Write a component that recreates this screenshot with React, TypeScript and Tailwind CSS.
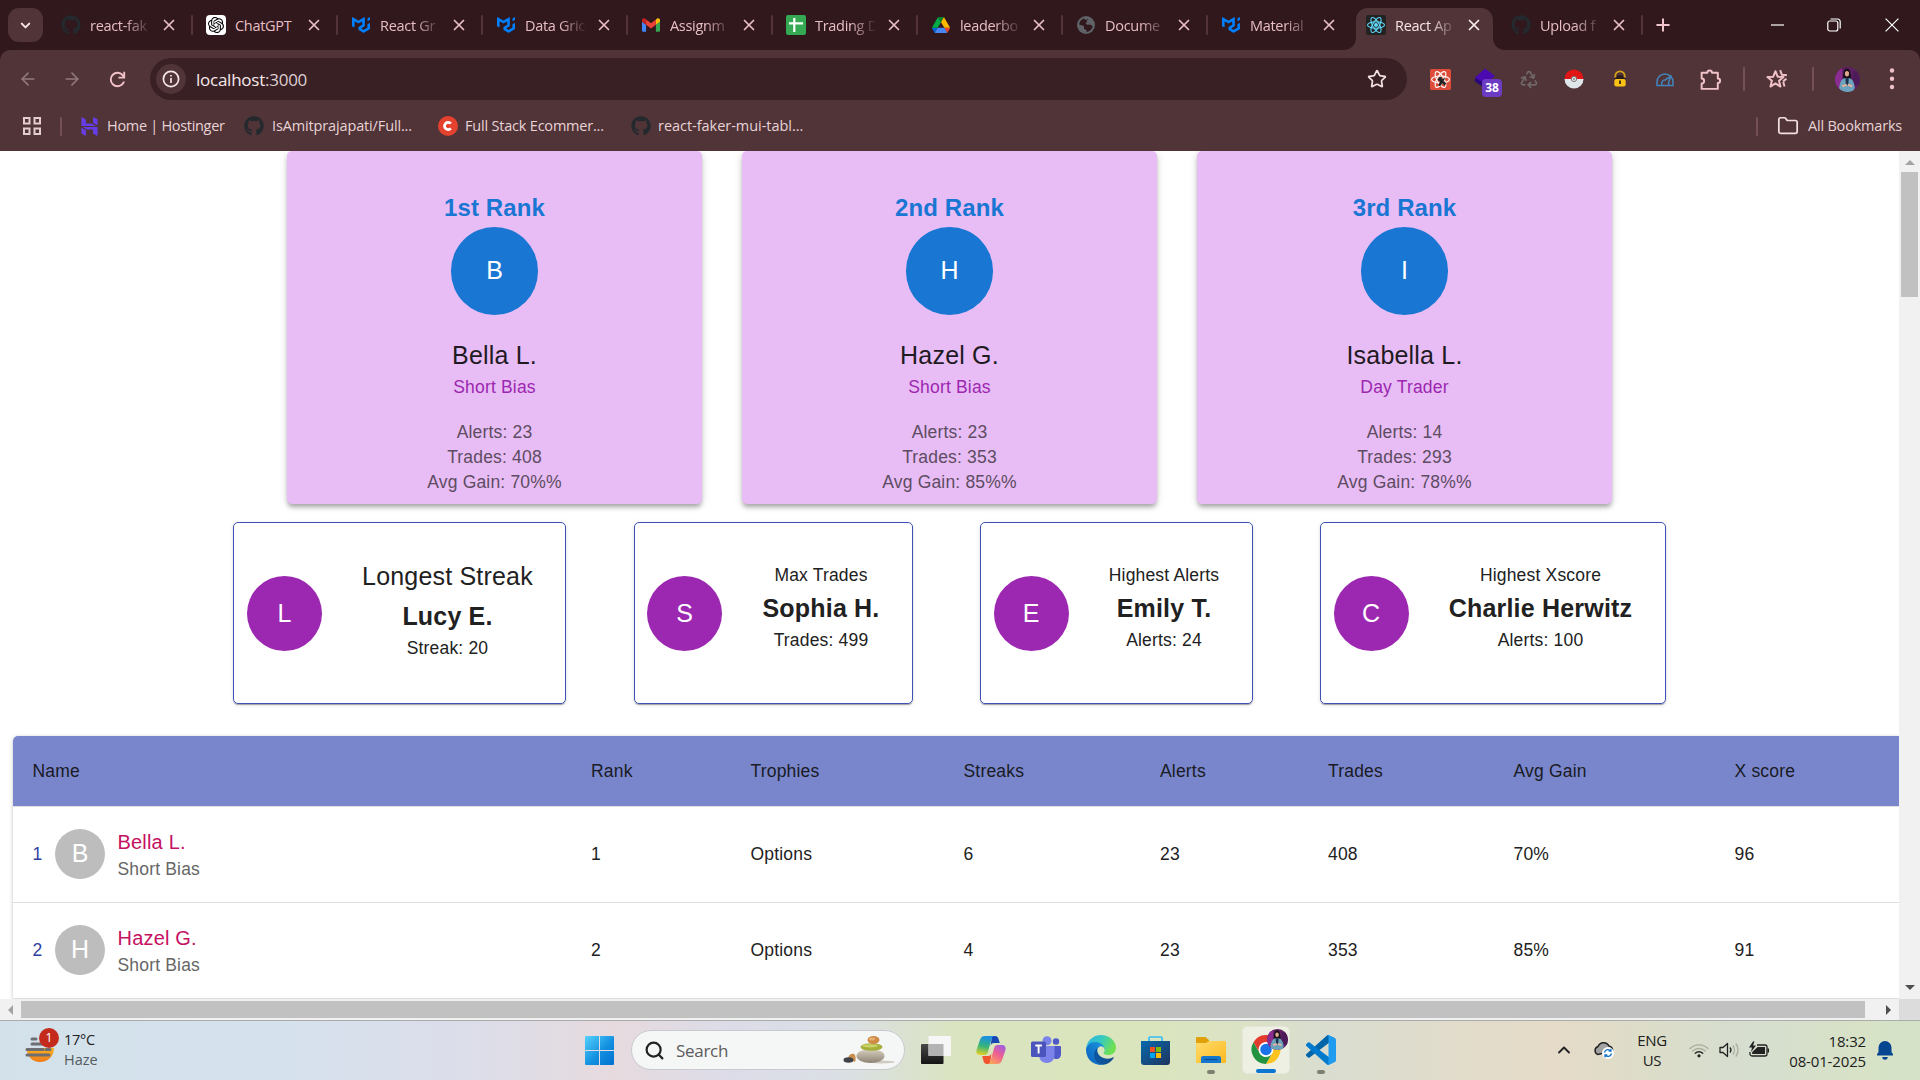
import React from "react";
import { FaGithub } from "react-icons/fa";
import { SiMui, SiOpenai, SiHostinger } from "react-icons/si";
import { ArrowLeft, ArrowRight, Recycle, Star, X, Plus, Folder, ChevronDown, ChevronUp, Search } from "lucide-react";

const UI = "font-['Open_Sans','Noto_Sans',sans-serif]";
const ARIAL = "font-['Liberation_Sans',Arial,sans-serif]";

/* ---------- favicons ---------- */
const Github = () => <FaGithub className="size-5 text-[#24292e]" />;

const OpenAi = () => (
  <span className="flex size-5 items-center justify-center rounded-[4px] bg-white">
    <SiOpenai className="size-4 text-black" />
  </span>
);

const Mui = () => <SiMui className="mx-px size-[18px] text-[#007fff]" />;

const Gmail = () => (
  <svg viewBox="52 42 88 66" className="mx-px h-[14px] w-[18px]">
    <path fill="#4285f4" d="M58 108h14V74L52 59v43c0 3.32 2.69 6 6 6" />
    <path fill="#34a853" d="M120 108h14c3.32 0 6-2.69 6-6V59l-20 15" />
    <path fill="#fbbc04" d="M120 48v26l20-15v-8c0-7.42-8.47-11.65-14.4-7.2" />
    <path fill="#ea4335" d="M72 74V48l24 18 24-18v26L96 92" />
    <path fill="#c5221f" d="M52 51v8l20 15V48l-5.600-4.200c-5.940-4.450-14.400-.220-14.400 7.200" />
  </svg>
);

const Sheets = () => (
  <svg viewBox="0 0 20 20" className="size-5">
    <rect width="20" height="20" rx="2" fill="#34a853" />
    <path d="M8.300 3v14M3 8.300h14" stroke="#fff" strokeWidth="2.200" />
  </svg>
);

const Drive = () => (
  <svg viewBox="0 0 87.3 78" className="mx-px h-4 w-[18px]">
    <path d="m6.600 66.850 3.850 6.650c.8 1.400 1.950 2.500 3.300 3.300l13.750-23.800h-27.500c0 1.550.4 3.100 1.200 4.500z" fill="#0066da" />
    <path d="m43.650 25-13.750-23.800c-1.350.8-2.500 1.900-3.300 3.300l-25.400 44a9.060 9.060 0 0 0-1.200 4.500h27.500z" fill="#00ac47" />
    <path d="m73.550 76.800c1.350-.8 2.500-1.900 3.300-3.300l1.600-2.750 7.650-13.250c.8-1.400 1.200-2.950 1.200-4.500h-27.500l5.850 11.500z" fill="#ea4335" />
    <path d="m43.650 25 13.750-23.800c-1.350-.8-2.900-1.200-4.500-1.200h-18.500c-1.600 0-3.150.45-4.500 1.200z" fill="#00832d" />
    <path d="m59.800 53h-32.300l-13.750 23.800c1.350.8 2.900 1.200 4.500 1.200h50.800c1.600 0 3.150-.45 4.500-1.200z" fill="#4688f4" />
    <path d="m73.400 26.500-12.700-22c-.8-1.400-1.950-2.500-3.300-3.300l-13.750 23.800 16.150 28h27.450c0-1.550-.4-3.100-1.200-4.500z" fill="#ffba00" />
  </svg>
);

const Globe = () => (
  <svg viewBox="0 0 20 20" className="size-5">
    <circle cx="10" cy="10" r="9" fill="#5f6368" />
    <path d="M8 3.500C5 4.500 3.200 7 3.200 9.500L8 11v3l2.500 1v2c3-.3 5.500-2.500 6.200-5.500l-1.800-1.800h-4L9.500 8l2.800-1.500V4L9.500 5z" fill="#30181d" />
    <path d="M10.500 5.500 13 4l2.500 2-1 2.500-3-.5z" fill="#5f6368" />
  </svg>
);

const Atom = ({ color }: { color: string }) => (
  <g fill="none" stroke={color} strokeWidth="1.100">
    <ellipse cx="10" cy="10" rx="8.500" ry="3.300" />
    <ellipse cx="10" cy="10" rx="8.500" ry="3.300" transform="rotate(60 10 10)" />
    <ellipse cx="10" cy="10" rx="8.500" ry="3.300" transform="rotate(120 10 10)" />
    <circle cx="10" cy="10" r="1.400" fill={color} />
  </g>
);

const ReactIcon = () => (
  <svg viewBox="0 0 20 20" className="size-5">
    <rect width="20" height="20" rx="2" fill="#222" />
    <Atom color="#61dafb" />
  </svg>
);

const tabs = [
  { icon: <Github />, title: "react-fak" },
  { icon: <OpenAi />, title: "ChatGPT", whole: true },
  { icon: <Mui />, title: "React Gr" },
  { icon: <Mui />, title: "Data Gric" },
  { icon: <Gmail />, title: "Assignm" },
  { icon: <Sheets />, title: "Trading D" },
  { icon: <Drive />, title: "leaderbo" },
  { icon: <Globe />, title: "Docume" },
  { icon: <Mui />, title: "Material" },
  { icon: <ReactIcon />, title: "React Ap", active: true },
  { icon: <Github />, title: "Upload f" },
];

function TabStrip() {
  return (
    <div className="flex h-[50px] shrink-0 bg-[#30181d]">
      <div className="mt-2 ml-2 flex h-[34px] w-[35px] items-center justify-center rounded-[11px] bg-[#503438]">
        <ChevronDown className="size-[15px] text-[#f6e2e5]" strokeWidth={3.200} />
      </div>
      <div className="ml-[5px] flex">
        {tabs.map((t, i) => (
          <div key={i} className="relative w-[145px]">
            {t.active && (
              <svg viewBox="0 0 162 42" className="absolute top-2 -left-[10px] h-[42px] w-[162px]">
                <path d="M0 42C8 42 13 37 13 29V12C13 5 18 0 25 0H138C145 0 150 5 150 12V29C150 37 155 42 162 42Z" fill="#503438" />
              </svg>
            )}
            <div className="relative mt-[14px] flex h-[22px] items-center pl-[12px]">
              <span className="flex w-[21px] justify-center">{t.icon}</span>
              <span
                className={`ml-[9px] w-[60px] pt-px text-[14.500px] tracking-[-0.300px] whitespace-nowrap ${t.whole ? "" : "[mask-image:linear-gradient(to_right,black_58%,rgba(0,0,0,0.12)_98%)]"} ${t.active ? "text-[#f8e4e6]" : "text-[#e8bec4]"}`}
              >
                {t.title}
              </span>
              <X className={`ml-[10px] size-[18px] ${t.active ? "text-[#fbeced]" : "text-[#e8bec4]"}`} strokeWidth={2.300} />
              {i !== 8 && i !== 9 && <span className="ml-[13px] h-5 w-[2px] rounded bg-[#553439]" />}
            </div>
          </div>
        ))}
      </div>
      <div className="mt-[14px] flex h-[22px] items-center">
        <Plus className="ml-[10px] size-5 text-[#f0c6cc]" strokeWidth={2.400} />
        <svg viewBox="0 0 14 14" className="ml-[98px] size-[14px]">
          <path d="M0 7h13" stroke="#fff" strokeWidth="1.200" />
        </svg>
        <svg viewBox="0 0 14 14" className="ml-[42px] size-[14px]" fill="none" stroke="#fff" strokeWidth="1.200">
          <rect x=".8" y="3" width="10" height="10" rx="2" />
          <path d="M3.500 1h7A2.800 2.800 0 0 1 13.200 3.800v6.700" />
        </svg>
        <svg viewBox="0 0 14 14" className="ml-[44px] size-[14px]" stroke="#fff" strokeWidth="1.200">
          <path d="m.6.6 12.800 12.800M13.400.6.6 13.400" />
        </svg>
      </div>
    </div>
  );
}

const Portrait = ({ className }: { className: string }) => (
  <svg viewBox="0 0 24 24" className={className}>
    <defs>
      <clipPath id="portrait">
        <circle cx="12" cy="12" r="12" />
      </clipPath>
    </defs>
    <g clipPath="url(#portrait)">
      <rect width="24" height="24" fill="#5e1f63" />
      <path d="M0 0h7v24H0z" fill="#8a2c90" />
      <path d="M17 4h7v14h-7z" fill="#4d1c58" />
      <path d="M8 13C7.500 6 8.500 1.500 11.500 1.500S15.500 6 15.500 13z" fill="#1a1018" />
      <ellipse cx="11.500" cy="6.500" rx="2" ry="2.600" fill="#e0a994" />
      <path d="M4 20c.5-6 3-9.500 6-9.500h3c3 0 5.500 3.500 6 9.500l-2 5H6z" fill="#6ba3bd" />
      <path d="M10 10.500h3.200l-.4 7h-2.400z" fill="#1c3350" />
      <path d="M6.500 17.500 11 16l.5 2-4 1.500zM17 17.500 12.500 16l-.5 2 4 1.500z" fill="#e3b29d" />
    </g>
  </svg>
);

function Toolbar() {
  return (
    <div className="relative h-[58px] shrink-0 bg-[#30181d]">
      <div className="flex h-full items-center rounded-t-[10px] bg-[#503438]">
        <ArrowLeft className="ml-[18px] size-5 text-[#91797c]" strokeWidth={1.900} />
        <ArrowRight className="ml-[24px] size-5 text-[#91797c]" strokeWidth={1.900} />
        <svg viewBox="0 0 24 24" className="ml-[24px] size-[23px]" fill="#f0c2c8">
          <path d="M12 20q-3.350 0-5.675-2.325T4 12t2.325-5.675T12 4q1.725 0 3.300.713T18 6.750V4h2v7h-7V9h4.200q-.8-1.400-2.187-2.200T12 6Q9.500 6 7.750 7.750T6 12t1.750 4.250T12 18q1.925 0 3.475-1.100T17.650 14h2.100q-.7 2.650-2.850 4.325T12 20" />
        </svg>
        <div className="ml-[21px] flex h-[42px] w-[1257px] items-center rounded-full bg-[#382024]">
          <span className="ml-[6px] flex size-[30px] items-center justify-center rounded-full bg-[#503438]">
            <svg viewBox="0 0 18 18" className="size-[18px]" fill="none" stroke="#f6e6e8" strokeWidth="1.700">
              <circle cx="9" cy="9" r="7.600" />
              <path d="M9 8v5M9 5v1.600" />
            </svg>
          </span>
          <span className="ml-[10px] pt-px text-[17px] tracking-[-0.250px] text-[#f7e8ea]">
            localhost<span className="text-[#dfced1]">:3000</span>
          </span>
          <Star className="mr-[20px] ml-auto size-5 text-[#f0dfe1]" strokeWidth={2.100} />
        </div>
        <svg viewBox="0 0 20 20" className="ml-[23px] size-[21px]">
          <rect width="20" height="20" rx="1.500" fill="#dd4b39" />
          <Atom color="#fff" />
          <path d="M9 7.500h2l.3 2 3.500-1-2 3 2.700 2-1.500 2.500-2-2.500-2.500 3-1.500-1 1.500-3.500-2.500-1.500z" fill="#222" />
        </svg>
        <div className="relative ml-[21px] h-[30px] w-[30px]">
          <svg viewBox="0 0 30 30" className="size-[30px]">
            <path d="m4 12-1.500 5L12 24l9-6z" fill="#29087c" />
            <path d="m13 4.500 10 7.500-10 7.500L3 13.500z" fill="#4a0ab0" />
          </svg>
          <span className="absolute top-[15px] left-[10px] flex h-[18px] w-5 items-center justify-center rounded-[4px] bg-[#6b3bc4] text-[12px] font-bold text-white">38</span>
        </div>
        <Recycle className="ml-[17px] size-5 text-[#716869]" strokeWidth={2} />
        <svg viewBox="0 0 20 20" className="ml-[25px] size-5">
          <path d="M.5 10a9.500 9.500 0 0 1 19 0z" fill="#e01616" />
          <path d="M.5 10a9.500 9.500 0 0 0 19 0z" fill="#dfe7ea" />
          <circle cx="10" cy="10" r="2.600" fill="#e5e5e5" stroke="#777" strokeWidth="1" />
          <circle cx="10" cy="10" r="1" fill="#888" />
        </svg>
        <svg viewBox="0 0 16 20" className="ml-[28px] h-5 w-4">
          <path d="M3.300 9V7a4.700 4.700 0 0 1 9.400 0v2" fill="none" stroke="#d9a514" strokeWidth="1.800" />
          <path d="M5 6.300h6V8l2.500.8v1.500h-11V8.800L5 8z" fill="#2a1d20" />
          <rect x="2.300" y="10" width="11.400" height="7.500" rx="2" fill="#fbc114" />
          <path d="M8 11.500v3.500" stroke="#33251b" strokeWidth="1.800" />
        </svg>
        <svg viewBox="0 0 20 20" className="ml-[27px] size-5" fill="none" stroke="#4285bd" strokeWidth="1.500">
          <path d="M2 16.500v-3.500a8 8 0 0 1 16 0v3.500z" />
          <path d="M7 16a3.500 3.500 0 0 1 3-5l5.500-3.500-2 6.500.5 2" />
        </svg>
        <svg viewBox="0 0 24 24" className="ml-[23px] size-[25px]" fill="none" stroke="#f0c2c8" strokeWidth="1.900" strokeLinejoin="round">
          <path d="M3.500 5.500h5.500a2.200 2.200 0 0 1 4.400 0h5.600v5.500a2.200 2.200 0 0 1 0 4.400v5.600H3.500v-5.200a2.300 2.300 0 0 0 0-4.800z" />
        </svg>
        <span className="ml-[20px] h-6 w-[2px] rounded bg-[#755155]" />
        <svg viewBox="0 0 24 24" className="ml-[19px] size-[25px]" fill="none" stroke="#f0c2c8" strokeWidth="1.900" strokeLinejoin="round">
          <path d="m11 4 2.100 5.300 5.600.4-4.300 3.600 1.400 5.500-4.800-3-4.800 3 1.400-5.500L3.300 9.700l5.600-.4z" />
          <path d="m15.500 3 1.700 4.500 4.800.5M18.300 13.800l3.200-2.600M18.500 14.500l1.200 4.300" />
        </svg>
        <span className="ml-[23px] h-6 w-[2px] rounded bg-[#755155]" />
        <Portrait className="ml-[21px] size-[25px]" />
        <svg viewBox="0 0 6 24" className="ml-[29px] h-6 w-[6px]" fill="#f0c2c8">
          <circle cx="3" cy="3.500" r="2.200" />
          <circle cx="3" cy="11.700" r="2.200" />
          <circle cx="3" cy="20" r="2.200" />
        </svg>
      </div>
    </div>
  );
}

function Bookmarks() {
  return (
    <div className="flex h-[43px] shrink-0 items-center bg-[#503438] pb-[7px] text-[14.500px] whitespace-nowrap text-[#e8d3d6]">
      <svg viewBox="0 0 18 18" className="ml-[23px] size-[18px]" fill="none" stroke="#e2cdd0" strokeWidth="2">
        <path d="M1 1h5.500v5.500H1zM11.500 1H17v5.500h-5.500zM1 11.500h5.500V17H1zM11.500 11.500H17V17h-5.500z" />
      </svg>
      <span className="ml-[19px] h-[19px] w-[2px] rounded bg-[#755155]" />
      <SiHostinger className="ml-[18px] size-[19px] text-[#673de6]" />
      <span className="ml-[8px] w-[118px] tracking-[-0.300px]">Home | Hostinger</span>
      <FaGithub className="ml-[19px] size-5 text-[#24292e]" />
      <span className="ml-[8px] w-[141px] tracking-[-0.140px]">IsAmitprajapati/Full...</span>
      <svg viewBox="0 0 20 20" className="ml-[25px] size-5">
        <circle cx="10" cy="10" r="10" fill="#e4412f" />
        <path d="M12.800 7.600A3.600 3.600 0 1 0 12.800 12.400" fill="none" stroke="#fff" strokeWidth="2.800" />
      </svg>
      <span className="ml-[7px] w-[141px] tracking-[-0.200px]">Full Stack Ecommer...</span>
      <FaGithub className="ml-[25px] size-5 text-[#24292e]" />
      <span className="ml-[7px] tracking-[-0.030px]">react-faker-mui-tabl...</span>
      <span className="ml-auto h-[19px] w-[2px] rounded bg-[#755155]" />
      <Folder className="ml-[19px] size-[22px] text-[#f3dfe2]" strokeWidth={1.900} />
      <span className="mr-[17px] ml-[9px] w-[95px] tracking-[-0.200px]">All Bookmarks</span>
    </div>
  );
}

/* ---------- page ---------- */
const ranks = [
  { rank: "1st Rank", letter: "B", name: "Bella L.", type: "Short Bias", alerts: 23, trades: 408, gain: "70%%" },
  { rank: "2nd Rank", letter: "H", name: "Hazel G.", type: "Short Bias", alerts: 23, trades: 353, gain: "85%%" },
  { rank: "3rd Rank", letter: "I", name: "Isabella L.", type: "Day Trader", alerts: 14, trades: 293, gain: "78%%" },
];

const stats = [
  { letter: "L", label: "Longest Streak", name: "Lucy E.", value: "Streak: 20", card: "w-[333px] pl-[13px]", text: "w-[237px]", big: true },
  { letter: "S", label: "Max Trades", name: "Sophia H.", value: "Trades: 499", card: "ml-[68px] w-[279px] pl-[12px]", text: "w-[184px]" },
  { letter: "E", label: "Highest Alerts", name: "Emily T.", value: "Alerts: 24", card: "ml-[67px] w-[273px] pl-[12.500px]", text: "w-[177px]" },
  { letter: "C", label: "Highest Xscore", name: "Charlie Herwitz", value: "Alerts: 100", card: "ml-[67px] w-[346px] pl-[12.500px]", text: "w-[250px]" },
];

const cols = "grid grid-cols-[558.500px_159.500px_213px_196.500px_168px_185.500px_221px_1fr] items-center pl-[19.500px]";

const rows = [
  { n: 1, letter: "B", name: "Bella L.", type: "Short Bias", cells: ["1", "Options", "6", "23", "408", "70%", "96"] },
  { n: 2, letter: "H", name: "Hazel G.", type: "Short Bias", cells: ["2", "Options", "4", "23", "353", "85%", "91"] },
];

function Page() {
  return (
    <div className={`flex h-[848px] w-[1899px] flex-col overflow-hidden bg-white text-[17.500px] text-[#212121] ${ARIAL}`}>
      <div className="flex gap-10 pl-[287px]">
        {ranks.map((r) => (
          <div
            key={r.rank}
            className="flex h-[353px] w-[415px] flex-col items-center rounded-[5px] bg-[#e8bdf5] pt-[38px] shadow-[0px_4px_4px_-2px_rgba(0,0,0,0.2),0px_4px_5px_0px_rgba(0,0,0,0.14),0px_1px_10px_0px_rgba(0,0,0,0.12)]"
          >
            <div className="text-[24px] leading-[38px] font-bold tracking-[0.100px] text-[#1976d2]">{r.rank}</div>
            <div className="flex size-[87.500px] items-center justify-center rounded-full bg-[#1976d2] text-[25px] text-white">{r.letter}</div>
            <div className="mt-[20.500px] text-[25px] leading-[40px] tracking-[0.190px] text-[#1f1a22]">{r.name}</div>
            <div className="leading-[24px] tracking-[0.180px] text-[#9c27b0]">{r.type}</div>
            <div className="mt-[21px] text-center leading-[25px] tracking-[0.180px] text-[#5d4c62]">
              <div>Alerts: {r.alerts}</div>
              <div>Trades: {r.trades}</div>
              <div>Avg Gain: {r.gain}</div>
            </div>
          </div>
        ))}
      </div>

      <div className="mt-[18px] flex pl-[233px]">
        {stats.map((s) => (
          <div
            key={s.letter}
            className={`flex h-[182px] rounded-[5px] border border-[#3f51b5] shadow-[0px_2px_1px_-1px_rgba(0,0,0,0.2),0px_1px_1px_0px_rgba(0,0,0,0.14),0px_1px_4px_0px_rgba(0,0,0,0.12)] ${s.card}`}
          >
            <div className="mt-[53px] flex size-[75px] shrink-0 items-center justify-center rounded-full bg-[#9c27b0] text-[25px] text-white">{s.letter}</div>
            <div className={`ml-[7px] shrink-0 text-center ${s.text} ${s.big ? "pt-[33px]" : "pt-[39px]"}`}>
              <div className={s.big ? "text-[25px] leading-[40px] tracking-[0.190px]" : "leading-[26px] tracking-[0.180px]"}>{s.label}</div>
              <div className="text-[25px] leading-[40px] font-bold tracking-[0.190px]">{s.name}</div>
              <div className="leading-[24px] tracking-[0.180px]">{s.value}</div>
            </div>
          </div>
        ))}
      </div>

      <div className="mt-[32px] ml-[13px] rounded-tl-[5px] shadow-[0px_1px_4px_0px_rgba(0,0,0,0.24)]">
        <div className={`h-[71px] rounded-tl-[5px] border-b border-[#dedede] bg-[#7986cb] text-[#1a1b24] ${cols}`}>
          {["Name", "Rank", "Trophies", "Streaks", "Alerts", "Trades", "Avg Gain", "X score"].map((h) => (
            <span key={h} className="tracking-[0.180px]">{h}</span>
          ))}
        </div>
        {rows.map((r) => (
          <div key={r.n} className={`h-[96px] border-b border-[#dedede] bg-white ${cols}`}>
            <div className="flex items-center">
              <span className="w-[22.500px] text-[#303f9f]">{r.n}</span>
              <span className="mb-px flex size-[50px] items-center justify-center rounded-full bg-[#bdbdbd] text-[25px] text-white">{r.letter}</span>
              <div className="ml-[12.500px]">
                <div className="text-[20px] leading-[29px] tracking-[0.190px] text-[#c51162]">{r.name}</div>
                <div className="leading-[25px] tracking-[0.180px] text-[#666]">{r.type}</div>
              </div>
            </div>
            {r.cells.map((c, i) => (
              <span key={i} className="tracking-[0.180px]">{c}</span>
            ))}
          </div>
        ))}
      </div>
    </div>
  );
}

function VScroll() {
  return (
    <div className="flex h-[848px] w-[21px] flex-col items-center bg-[#f1f1f1]">
      <svg viewBox="0 0 10 5" className="mt-[9px] h-[5px] w-[10px]" fill="#a3a3a3">
        <path d="M0 5 5 0l5 5z" />
      </svg>
      <div className="mt-[7px] h-[125px] w-[17px] bg-[#c1c1c1]" />
      <svg viewBox="0 0 10 5" className="mt-auto mb-[9px] h-[5px] w-[10px]" fill="#505050">
        <path d="M0 0l5 5 5-5z" />
      </svg>
    </div>
  );
}

function HScroll() {
  return (
    <div className="flex h-[21px] shrink-0 items-center bg-[#f1f1f1]">
      <svg viewBox="0 0 5 10" className="ml-[8px] h-[10px] w-[5px]" fill="#a3a3a3">
        <path d="M5 0 0 5l5 5z" />
      </svg>
      <div className="ml-[8px] h-[17px] w-[1844px] bg-[#c1c1c1]" />
      <svg viewBox="0 0 5 10" className="ml-[21px] h-[10px] w-[5px]" fill="#505050">
        <path d="M0 0l5 5-5 5z" />
      </svg>
      <div className="ml-auto h-full w-[21px] bg-[#dcdcdc]" />
    </div>
  );
}

/* ---------- taskbar ---------- */
const Haze = () => (
  <svg viewBox="0 0 30 30" className="size-[30px]">
    <defs>
      <linearGradient id="sun" x1="0" y1="0" x2="0" y2="1">
        <stop offset="0" stopColor="#f9b51f" />
        <stop offset="1" stopColor="#ef7a1a" />
      </linearGradient>
    </defs>
    <path d="M1 15h28c0 8-6 14-14 14S3 24 1 15" fill="url(#sun)" />
    <path d="M7 6h4M7 11h21M2 16.500h16M21 16.500h4M2 22h22" stroke="#6d6d72" strokeWidth="3" strokeLinecap="round" />
  </svg>
);

const Windows = () => (
  <svg viewBox="0 0 29 29" className="size-[29px]">
    <defs>
      <linearGradient id="win" x1="0" y1="0" x2="1" y2="1">
        <stop offset="0" stopColor="#55d2fb" />
        <stop offset=".55" stopColor="#1390e0" />
        <stop offset="1" stopColor="#0070cf" />
      </linearGradient>
    </defs>
    <path d="M0 1a1 1 0 0 1 1-1h13v14H0zM15 0h13a1 1 0 0 1 1 1v13H15zM0 15h14v14H1a1 1 0 0 1-1-1zM15 15h14v13a1 1 0 0 1-1 1H15z" fill="url(#win)" />
  </svg>
);

const Stones = () => (
  <svg viewBox="0 0 52 28" className="h-[28px] w-[52px]">
    <defs>
      <linearGradient id="stone" x1="0" y1="0" x2="0" y2="1">
        <stop offset="0" stopColor="#d8d0c2" />
        <stop offset="1" stopColor="#8f8474" />
      </linearGradient>
    </defs>
    <ellipse cx="38" cy="26" rx="14" ry="1.500" fill="#cfcabf" />
    <ellipse cx="27.500" cy="20" rx="14" ry="7" fill="url(#stone)" />
    <ellipse cx="28.500" cy="11" rx="11" ry="3.800" fill="#a5b03a" />
    <ellipse cx="27" cy="9.800" rx="8" ry="1.600" fill="#c9d368" />
    <ellipse cx="30.500" cy="4" rx="6" ry="4" fill="#cf8a43" />
    <ellipse cx="29" cy="3" rx="3" ry="1.500" fill="#e6b073" />
    <path d="M5 22c1-4 4-5 6-4s2 6 1 8z" fill="#c98f4f" />
    <ellipse cx="5.500" cy="24" rx="5" ry="2.800" fill="#3f4246" />
  </svg>
);

const TaskView = () => (
  <svg viewBox="0 0 30 28" className="h-[28px] w-[30px]">
    <defs>
      <linearGradient id="tv" x1="0" y1="0" x2="0" y2="1">
        <stop offset="0" stopColor="#484848" />
        <stop offset="1" stopColor="#141414" />
      </linearGradient>
    </defs>
    <rect x="0" y="8" width="22.500" height="20" rx="1" fill="url(#tv)" />
    <rect x="7.500" y="0" width="22.500" height="20" rx="1" fill="#f6f6f6" />
    <rect x="7.500" y="8" width="15" height="12" fill="#b3b3b3" />
  </svg>
);

const Copilot = () => (
  <svg viewBox="0 0 30 28" className="h-[28px] w-[30px]">
    <defs>
      <linearGradient id="cpA" x1="0.300" y1="0" x2="0.100" y2="1">
        <stop offset="0" stopColor="#1b8fe0" />
        <stop offset=".5" stopColor="#35b579" />
        <stop offset="1" stopColor="#f4d21f" />
      </linearGradient>
      <linearGradient id="cpB" x1="0.900" y1="0" x2="0.300" y2="1">
        <stop offset="0" stopColor="#9b5be8" />
        <stop offset=".5" stopColor="#ef5f92" />
        <stop offset="1" stopColor="#fba25a" />
      </linearGradient>
    </defs>
    <path d="M16 0h3c2 0 3 1 3.500 3l1.300 4H18c-2 0-3 1-3.500 3z" fill="#1646b5" />
    <path d="M9 0h10c-2 0-3 1-3.500 3l-3.600 13c-.5 2-1.600 3-3.600 3H4C1 19-.3 16.500.7 13.500l3.400-10C5 1 6.500 0 9 0" fill="url(#cpA)" />
    <path d="M14 28h-3c-2 0-3-1-3.500-3L6.200 20H12c2 0 3-1 3.500-3z" fill="#f0542e" />
    <path d="M21 28H11c2 0 3-1 3.500-3l3.600-13c.5-2 1.600-3 3.600-3H26c3 0 4.300 2.500 3.300 5.500l-3.400 10C25 27 23.500 28 21 28" fill="url(#cpB)" />
  </svg>
);

const Teams = () => (
  <svg viewBox="0 0 30 28" className="h-[28px] w-[30px]">
    <circle cx="25" cy="5.500" r="3.200" fill="#5059c9" />
    <path d="M20 10h9a1 1 0 0 1 1 1v7c0 3-2 5-4.500 5S20 21 20 18z" fill="#5059c9" />
    <circle cx="16" cy="4.700" r="4.500" fill="#7b83eb" />
    <path d="M8 10h15.500v9c0 5-3.500 8-7.700 8S8 24 8 19z" fill="#7b83eb" />
    <rect x="0" y="5.500" width="15" height="15.500" rx="1.500" fill="#4b53bc" />
    <path d="M4.300 9.500h6.600M7.600 9.500v8" stroke="#fff" strokeWidth="1.900" />
  </svg>
);

const Edge = () => (
  <svg viewBox="0 0 256 256" className="size-[30px]">
    <defs>
      <linearGradient id="eA" x1="0" y1="0" x2="1" y2="0">
        <stop offset="0" stopColor="#0c59a4" />
        <stop offset="1" stopColor="#114a8b" />
      </linearGradient>
      <linearGradient id="eB" x1="1" y1="0" x2="0" y2="1">
        <stop offset="0" stopColor="#1b9de2" />
        <stop offset="1" stopColor="#0a5cbc" />
      </linearGradient>
      <linearGradient id="eC" x1="0" y1="0" x2="1" y2=".4">
        <stop offset="0" stopColor="#2fb0ea" />
        <stop offset=".5" stopColor="#35c9c3" />
        <stop offset="1" stopColor="#6fe052" />
      </linearGradient>
    </defs>
    <path d="M231 190.500c-3.400 1.800-6.900 3.400-10.500 4.700a101.900 101.900 0 0 1-35.900 6.400c-47.300 0-88.500-32.500-88.500-74.300a31.500 31.500 0 0 1 16.400-27.300c-42.800 1.800-53.800 46.400-53.800 72.500 0 74 68.100 81.400 82.800 81.400 7.900 0 19.800-2.300 27-4.600l1.300-.4a128.300 128.300 0 0 0 66.600-52.800 4 4 0 0 0-5.400-5.600z" fill="url(#eA)" />
    <path d="M105.700 241.400A79.200 79.200 0 0 1 83 220.100a80.700 80.700 0 0 1 29.500-120c3.200-1.500 8.500-4.100 15.600-4a32.400 32.400 0 0 1 25.700 13 31.900 31.900 0 0 1 6.300 18.700c0-.2 24.500-79.600-80-79.600-43.900 0-80 41.700-80 78.200a130.200 130.200 0 0 0 12.100 56 128 128 0 0 0 156.400 67 75.500 75.500 0 0 1-62.800-8z" fill="url(#eB)" />
    <path d="M152.300 148.900c-.9 1-3.400 2.500-3.400 5.600 0 2.600 1.700 5.200 4.800 7.300 14.300 10 41.400 8.600 41.500 8.600a59.600 59.600 0 0 0 30.300-8.300 61.400 61.400 0 0 0 30.400-52.900c.3-22.400-8-37.300-11.300-43.900C223.500 23.900 177.700 0 128 0A128 128 0 0 0 0 126.200c.5-36.500 36.800-66 80-66 3.500 0 23.500.3 42 10.100 16.300 8.500 24.900 18.900 30.800 29.200 6.200 10.700 7.300 24.100 7.300 29.500 0 5.300-2.700 13.300-7.800 19.900z" fill="url(#eC)" />
  </svg>
);

const Store = () => (
  <svg viewBox="0 0 29 29" className="size-[29px]">
    <defs>
      <linearGradient id="st" x1="0" y1="0" x2="1" y2="1">
        <stop offset="0" stopColor="#0669ad" />
        <stop offset="1" stopColor="#20345e" />
      </linearGradient>
    </defs>
    <path d="M8 6V2a1 1 0 0 1 1-1h11a1 1 0 0 1 1 1v4" fill="none" stroke="#36bdf5" strokeWidth="1.700" />
    <path d="M0 5h29v21a3 3 0 0 1-3 3H3a3 3 0 0 1-3-3z" fill="url(#st)" />
    <path d="M9 11h5v5H9z" fill="#f25022" />
    <path d="M15 11h5v5h-5z" fill="#7fba00" />
    <path d="M9 17h5v5H9z" fill="#00a4ef" />
    <path d="M15 17h5v5h-5z" fill="#ffb900" />
  </svg>
);

const Explorer = () => (
  <svg viewBox="0 0 30 27" className="h-[27px] w-[30px]">
    <defs>
      <linearGradient id="ex" x1="0" y1="0" x2="1" y2="1">
        <stop offset="0" stopColor="#ffdb6b" />
        <stop offset="1" stopColor="#fbb91f" />
      </linearGradient>
    </defs>
    <path d="M0 1a1 1 0 0 1 1-1h8.500L13 3v4H0z" fill="#e0a009" />
    <path d="M0 6h10l3-2h16a1 1 0 0 1 1 1v20a1 1 0 0 1-1 1H1a1 1 0 0 1-1-1z" fill="url(#ex)" />
    <path d="M5 26v-5a2 2 0 0 1 2-2h16a2 2 0 0 1 2 2v5z" fill="#1479cc" />
    <path d="M8.500 22.500h13" stroke="#0a4d90" strokeWidth="1.200" />
  </svg>
);

const Chrome = () => (
  <svg viewBox="0 0 48 48" className="size-[30px]">
    <circle cx="24" cy="24" r="24" fill="#fff" />
    <path d="M3.200 12A24 24 0 0 1 44.800 12H24a12 12 0 0 0-10.400 18z" fill="#e33b2e" />
    <path d="M44.800 12A24 24 0 0 1 24 48l10.400-18A12 12 0 0 0 24 12z" fill="#fcc31e" />
    <path d="M24 48A24 24 0 0 1 3.200 12l10.400 18A12 12 0 0 0 34.400 30z" fill="#229342" />
    <circle cx="24" cy="24" r="12" fill="#fff" />
    <circle cx="24" cy="24" r="9.500" fill="#1a73e8" />
  </svg>
);

const VsCode = () => (
  <svg viewBox="0 0 100 100" className="size-[30px]">
    <path d="M96.500 10.800 75.900.9a6.200 6.200 0 0 0-7.100 1.200L1.300 63.600a4.200 4.200 0 0 0 0 6.200l5.500 5a4.200 4.200 0 0 0 5.300.2L93.400 13.400c2.700-2.100 6.600-.1 6.600 3.300v-.2c0-2.400-1.400-4.600-3.500-5.700z" fill="#0065a9" />
    <path d="m96.500 89.200-20.600 9.900a6.200 6.200 0 0 1-7.100-1.200L1.300 36.400a4.200 4.200 0 0 1 0-6.200l5.500-5a4.200 4.200 0 0 1 5.300-.2l81.300 61.600c2.700 2.100 6.600.1 6.600-3.300v.2c0 2.400-1.400 4.600-3.500 5.700z" fill="#007acc" />
    <path d="M75.900 99.100a6.200 6.200 0 0 1-7.100-1.200c2.300 2.300 6.200.7 6.200-2.600V4.700c0-3.300-3.900-4.900-6.200-2.600a6.200 6.200 0 0 1 7.100-1.200l20.600 9.900c2.100 1.100 3.500 3.200 3.500 5.700v67c0 2.400-1.400 4.600-3.500 5.600z" fill="#1f9cf0" />
  </svg>
);

function TaskbarApp({ children, running }: { children: React.ReactNode; running?: boolean }) {
  return (
    <div className="flex h-full w-[55px] flex-col items-center">
      <div className="mt-[14px] flex h-[30px] items-center">{children}</div>
      {running && <span className="mt-[5px] h-1 w-2 rounded-full bg-[#7d8070]" />}
    </div>
  );
}

function Taskbar() {
  return (
    <div className="flex h-[60px] shrink-0 items-start border-t border-[#a9acab] bg-[linear-gradient(90deg,#d3e1ea_0%,#d5e2ee_14%,#dcdde9_25%,#e6dade_32%,#dcdce8_38%,#dadfe4_44%,#dae4bf_50%,#dae5bd_60%,#dbe2c6_65%,#d9ddd0_69%,#e2dccb_76%,#e5dbc8_81%,#dcddc9_86%,#d6ded0_91%,#d7e2c6_97%,#d5e2c8_100%)] text-[#202020]">
      <div className="relative mt-[12px] ml-[25px]">
        <Haze />
        <span className="absolute -top-[5px] left-[14px] flex size-5 items-center justify-center rounded-full bg-[#c42b1c] text-[13px] text-white">1</span>
      </div>
      <div className="mt-[9px] ml-[9px] w-[480px] text-[14.500px] leading-[20px] tracking-[-0.300px]">
        <div>17°C</div>
        <div className="tracking-[0px] text-[#555b60]">Haze</div>
      </div>
      <div className="mt-[15px] ml-[41px]">
        <Windows />
      </div>
      <div className="mt-[9px] ml-[17px] flex h-[40px] w-[274px] items-center rounded-full border border-[#c9cad0] bg-[#f5f6f6]">
        <Search className="ml-[12px] size-[21px] text-[#222]" strokeWidth={2.500} />
        <span className="ml-[11px] pt-px text-[17px] tracking-[-0.300px] text-[#5c5c5c]">Search</span>
        <span className="mr-[9px] ml-auto">
          <Stones />
        </span>
      </div>
      <div className="ml-[3px] flex h-full">
        <TaskbarApp><TaskView /></TaskbarApp>
        <TaskbarApp><Copilot /></TaskbarApp>
        <TaskbarApp><Teams /></TaskbarApp>
        <TaskbarApp><Edge /></TaskbarApp>
        <TaskbarApp><Store /></TaskbarApp>
        <TaskbarApp running><Explorer /></TaskbarApp>
        <div className="relative mt-[5px] mr-[3px] ml-[4px] flex h-[48px] w-[48px] flex-col items-center rounded-[5px] border border-[#e3e6d8] bg-[#edf0e2] pt-[8px]">
          <Chrome />
          <Portrait className="absolute top-[2px] left-[24px] size-[21px]" />
          <span className="mt-[5px] h-1 w-5 shrink-0 rounded-full bg-[#0b76d1]" />
        </div>
        <TaskbarApp running><VsCode /></TaskbarApp>
      </div>
      <div className="mt-[8px] ml-auto flex h-[42px] items-center text-[15px] leading-[20px] tracking-[-0.200px]">
        <ChevronUp className="size-[20px]" strokeWidth={2.200} />
        <svg viewBox="0 0 22 20" className="ml-[19px] h-5 w-[22px]">
          <path d="M5 14.500A4.200 4.200 0 0 1 5 6.500 6 6 0 0 1 16 6a4.200 4.200 0 0 1 3.500 5z" fill="#a2a2a2" stroke="#222" strokeWidth="1.500" />
          <circle cx="15" cy="13" r="6" fill="#fff" />
          <path d="M11.500 12.500a3.600 3.600 0 0 1 6.300-1.600M18.500 13.500a3.600 3.600 0 0 1-6.300 1.600M18 8.800v2.400h-2.400M12 17.200v-2.400h2.400" fill="none" stroke="#1173c7" strokeWidth="1.300" />
        </svg>
        <div className="ml-[18px] w-[38px] text-center tracking-[-0.400px]">
          <div>ENG</div>
          <div>US</div>
        </div>
        <svg viewBox="0 0 20 16" className="ml-[18px] h-4 w-5" fill="none" strokeWidth="1.400" strokeLinecap="round">
          <path d="M1 6.500a13 13 0 0 1 18 0M3.700 9a9 9 0 0 1 12.600 0" stroke="#abad9f" />
          <path d="M6.300 11.300a5.300 5.300 0 0 1 7.400 0" stroke="#222" />
          <circle cx="10" cy="13.800" r="1.600" fill="#222" />
        </svg>
        <svg viewBox="0 0 22 18" className="ml-[10px] h-[18px] w-[22px]" fill="none" stroke="#222" strokeWidth="1.300" strokeLinejoin="round">
          <path d="M1 6.500h3L8.500 2.500v13L4 11.500H1z" />
          <path d="M11 6.500a4 4 0 0 1 0 5" />
          <path d="M13.800 4.500a7 7 0 0 1 0 9M16.800 2.500a10.500 10.500 0 0 1 0 13" stroke="#aaac9e" />
        </svg>
        <svg viewBox="0 0 20 18" className="ml-[8px] h-[18px] w-5">
          <path d="M8 4h8a2 2 0 0 1 2 2v7a2 2 0 0 1-2 2H3a2 2 0 0 1-2-2v-2" fill="none" stroke="#222" strokeWidth="1.300" />
          <path d="M8.500 6H16v7H3.200v-2L7 7.500z" fill="#222" />
          <path d="M18.500 7.500H20v4h-1.500zM4 .5 0 6.500h3L2 11l5-6.500H4L5.500.5z" fill="#222" />
        </svg>
        <div className="-mb-px ml-[15px] w-[82px] text-right tracking-[-0.150px]">
          <div>18:32</div>
          <div>08-01-2025</div>
        </div>
        <svg viewBox="0 0 18 20" className="mr-[26px] ml-[10px] h-5 w-[18px]" fill="#06458f">
          <path d="M1 15.500v-1.300L2.500 12V7.500a6.500 6.500 0 0 1 13 0V12l1.500 2.200v1.300zM6.300 17h5.400a2.700 2.700 0 0 1-5.400 0" />
        </svg>
      </div>
    </div>
  );
}

export default function App() {
  return (
    <div className={`flex h-[1080px] w-[1920px] flex-col overflow-hidden ${UI}`}>
      <TabStrip />
      <Toolbar />
      <Bookmarks />
      <div className="flex h-[848px] shrink-0">
        <Page />
        <VScroll />
      </div>
      <HScroll />
      <Taskbar />
    </div>
  );
}
